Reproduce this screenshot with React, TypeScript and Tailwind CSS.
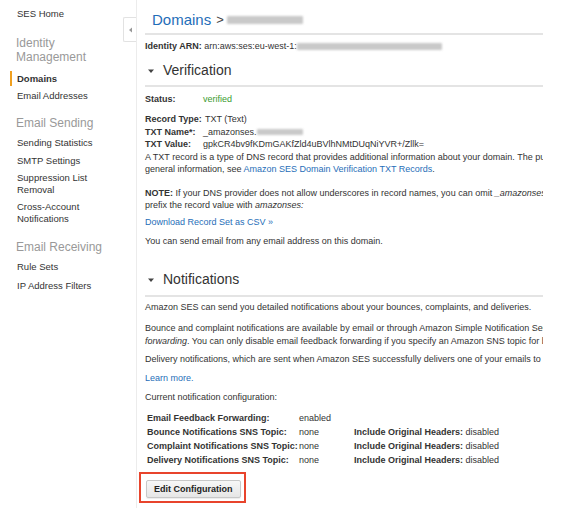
import React from "react";

const Blur = ({ w, h = 7, cls = "" }: { w: number; h?: number; cls?: string }) => (
  <span
    className={"inline-block align-middle bg-[#c9c9c9] blur-[1.2px] rounded-[1px] " + cls}
    style={{ width: w, height: h }}
  />
);

function Sidebar() {
  const item = "text-[9.5px] leading-[12px] text-[#333] pl-[17px]";
  const head = "text-[12px] leading-[14px] text-[#999] pl-[16px]";
  return (
    <div className="w-[123px] shrink-0 pt-[8px]">
      <div className={item}>SES Home</div>
      <div className={head + " mt-[16px]"}>Identity<br />Management</div>
      <div className="relative mt-[9px]">
        <div className="absolute left-[10px] top-[-2px] w-[2px] h-[15px] bg-[#f0a020]" />
        <div className={item + " font-bold text-[#222]"}>Domains</div>
      </div>
      <div className={item + " mt-[5px]"}>Email Addresses</div>
      <div className={head + " mt-[14px]"}>Email Sending</div>
      <div className={item + " mt-[7px]"}>Sending Statistics</div>
      <div className={item + " mt-[6px]"}>SMTP Settings</div>
      <div className={item + " mt-[5px]"}>Suppression List<br />Removal</div>
      <div className={item + " mt-[5px]"}>Cross-Account<br />Notifications</div>
      <div className={head + " mt-[15px]"}>Email Receiving</div>
      <div className={item + " mt-[7px]"}>Rule Sets</div>
      <div className={item + " mt-[7px]"}>IP Address Filters</div>
    </div>
  );
}

function SectionTitle({ children }: { children: React.ReactNode }) {
  return (
    <div className="flex items-center h-[20px]">
      <svg width="8" height="6" viewBox="0 0 8 6" className="ml-[2px] mr-[8px]">
        <path d="M1 1.5 L7 1.5 L4 5 Z" fill="#444" />
      </svg>
      <span className="text-[14px] text-[#333]">{children}</span>
    </div>
  );
}

const Rule = () => <div className="h-[2px] bg-[#e4e4e4] w-full" />;

export default function App() {
  const body = "text-[9px] leading-[12.5px] text-[#333]";
  return (
    <div className="w-[571px] h-[518px] bg-white flex font-['Liberation_Sans',Arial,sans-serif] overflow-hidden">
      <Sidebar />
      <div className="w-[13px] shrink-0 pt-[17px]">
        <div className="h-[25px] w-[14px] border border-r-0 border-[#e2e2e2] rounded-l-[2px] bg-white flex items-center justify-center">
          <svg width="5" height="6" viewBox="0 0 5 6">
            <path d="M4 0.5 L4 5.5 L1 3 Z" fill="#999" />
          </svg>
        </div>
      </div>
      <div className="w-[407px] h-[508px] shrink-0 border-l border-[#ececec] overflow-hidden pl-[8px] whitespace-nowrap">
        <div className="h-[33px] flex items-center pl-[7px] pt-[7px]">
          <span className="text-[15px] text-[#1f6eb8]">Domains</span>
          <span className="text-[13px] text-[#444] ml-[5px]">&gt;</span>
          <Blur w={76} h={8} cls="ml-[3px]" />
        </div>
        <Rule />
        <div className={body + " mt-[5px]"}>
          <b>Identity ARN:</b> arn:aws:ses:eu-west-1:<Blur w={145} h={7} />
        </div>
        <div className="mt-[8px]">
          <SectionTitle>Verification</SectionTitle>
        </div>
        <div className="mt-[4px]"><Rule /></div>
        <div className={body + " mt-[6px] flex"}>
          <b className="w-[58px]">Status:</b>
          <span className="text-[#3c9b2f]">verified</span>
        </div>
        <div className={body + " mt-[8px]"}>
          <div className="flex">
            <b className="min-w-[58px] mr-[2px]">Record Type:</b>
            <span>TXT (Text)</span>
          </div>
          <div className="flex">
            <b className="w-[58px]">TXT Name*:</b>
            <span>_amazonses.<Blur w={46} h={6} /></span>
          </div>
          <div className="flex">
            <b className="w-[58px]">TXT Value:</b>
            <span>gpkCR4bv9fKDmGAKfZld4uBVlhNMtDUqNiYVR+/Zllk=</span>
          </div>
          <div>A TXT record is a type of DNS record that provides additional information about your domain. The purpose of this record is</div>
          <div>general information, see <span className="text-[#1f6eb8]">Amazon SES Domain Verification TXT Records</span>.</div>
        </div>
        <div className={body + " mt-[11px]"}>
          <div><b>NOTE:</b> If your DNS provider does not allow underscores in record names, you can omit <i>_amazonses</i> from the</div>
          <div>prefix the record value with <i>amazonses:</i></div>
        </div>
        <div className={body + " mt-[4px]"}>
          <span className="text-[#1f6eb8]">Download Record Set as CSV »</span>
        </div>
        <div className={body + " mt-[7px]"}>You can send email from any email address on this domain.</div>
        <div className="mt-[22px]">
          <SectionTitle>Notifications</SectionTitle>
        </div>
        <div className="mt-[5px]"><Rule /></div>
        <div className={body + " mt-[4px]"}>Amazon SES can send you detailed notifications about your bounces, complaints, and deliveries.</div>
        <div className={body + " mt-[9px]"}>
          <div>Bounce and complaint notifications are available by email or through Amazon Simple Notification Service (Amazon SNS)</div>
          <div><i>forwarding</i>. You can only disable email feedback forwarding if you specify an Amazon SNS topic for both bounces</div>
        </div>
        <div className={body + " mt-[6px]"}>Delivery notifications, which are sent when Amazon SES successfully delivers one of your emails to</div>
        <div className={body + " mt-[6px]"}>
          <span className="text-[#1f6eb8]">Learn more.</span>
        </div>
        <div className={body + " mt-[7px]"}>Current notification configuration:</div>
        <div className="text-[9px] leading-[14.3px] text-[#333] mt-[7px] pl-[2px]">
          {[
            ["Email Feedback Forwarding:", "enabled", false],
            ["Bounce Notifications SNS Topic:", "none", true],
            ["Complaint Notifications SNS Topic:", "none", true],
            ["Delivery Notifications SNS Topic:", "none", true],
          ].map(([l, v, h]) => (
            <div className="flex" key={l as string}>
              <b className="w-[152px]">{l}</b>
              <span className="w-[55px]">{v}</span>
              {h ? (
                <span>
                  <b>Include Original Headers:</b> disabled
                </span>
              ) : null}
            </div>
          ))}
        </div>
        <div className="mt-[4px] ml-[-6px] inline-block border-2 border-[#e8442c] pt-[1px] pb-[2px] pl-[5px] pr-[3px]">
          <button className="h-[18px] px-[7px] text-[9px] font-bold text-[#222] border border-[#c8c8c8] rounded-[2px] bg-gradient-to-b from-[#f7f7f7] to-[#e6e6e6] shadow-[0_1px_1px_rgba(0,0,0,0.08)]">
            Edit Configuration
          </button>
        </div>
      </div>
    </div>
  );
}
